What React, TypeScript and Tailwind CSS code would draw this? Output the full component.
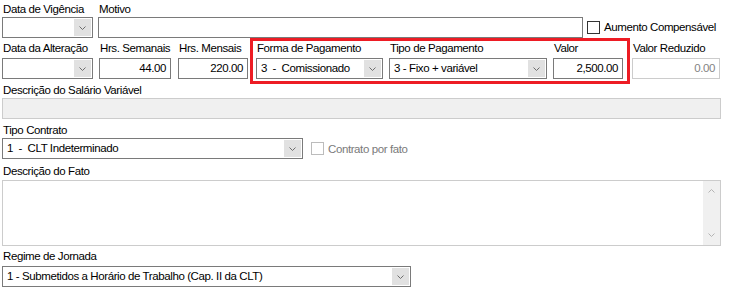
import React from 'react';

const Chevron = () => (
  <svg width="7" height="4" viewBox="0 0 7 4">
    <polyline points="0.5,0.5 3.5,3.5 6.5,0.5" fill="none" stroke="#6d6d6d" strokeWidth="1" />
  </svg>
);

const Combo = ({ value = '', className = '' }: { value?: string; className?: string }) => (
  <div className={`flex h-[21px] border border-[#7a7a7a] bg-white ${className}`}>
    <div className="flex-1 pl-[4px] leading-[19px] whitespace-pre overflow-hidden">{value}</div>
    <div className="w-[17px] my-px mr-px bg-[#e1e1e1] flex items-center justify-center">
      <Chevron />
    </div>
  </div>
);

const Input = ({
  value = '',
  className = '',
  disabled = false,
}: {
  value?: string;
  className?: string;
  disabled?: boolean;
}) => (
  <div
    className={`h-[21px] border pr-[4px] text-right leading-[19px] ${
      disabled ? 'border-[#cccccc] bg-white text-[#838383]' : 'border-[#7a7a7a] bg-white'
    } ${className}`}
  >
    {value}
  </div>
);

const CheckBox = ({ disabled = false }: { disabled?: boolean }) => (
  <div
    className={`w-[13px] h-[13px] shrink-0 border bg-white ${disabled ? 'border-[#bcbcbc]' : 'border-[#333333]'}`}
  />
);

const Label = ({ children, className = '' }: { children: React.ReactNode; className?: string }) => (
  <div className={`pl-px whitespace-nowrap ${className}`}>{children}</div>
);

export default function App() {
  return (
    <div className="w-[731px] h-[295px] bg-white text-black text-[11.5px] tracking-[-0.4px] font-['Liberation_Sans',Arial,sans-serif] overflow-hidden">
      <div className="flex flex-col pl-[2px]">
        {/* linha 1 */}
        <div className="flex items-start pt-px">
          <div className="w-[91px]">
            <Label className="h-[16px] leading-[16px]">Data de Vigência</Label>
            <Combo />
          </div>
          <div className="ml-[5px] w-[485px]">
            <Label className="h-[16px] leading-[16px]">Motivo</Label>
            <Input />
          </div>
          <div className="ml-[4px] mt-[19px] flex items-center gap-[4px] whitespace-nowrap">
            <CheckBox />
            <span className="leading-[14px]">Aumento Compensável</span>
          </div>
        </div>

        {/* linha 2 */}
        <div className="flex items-start">
          <div className="w-[91px] mt-[3px]">
            <Label className="h-[17px] leading-[14px]">Data da Alteração</Label>
            <Combo />
          </div>
          <div className="ml-[6px] w-[72px] mt-[3px]">
            <Label className="h-[17px] leading-[14px]">Hrs. Semanais</Label>
            <Input value="44.00" />
          </div>
          <div className="ml-[7px] w-[70px] mt-[3px]">
            <Label className="h-[17px] leading-[14px]">Hrs. Mensais</Label>
            <Input value="220.00" />
          </div>
          <div className="ml-[2px] flex border-[3px] border-[#ed1c24] pl-[3px] pr-[4px] pb-[2px] gap-[6px]">
            <div className="w-[127px]">
              <Label className="h-[17px] leading-[14px]">Forma de Pagamento</Label>
              <Combo value="3  -  Comissionado" />
            </div>
            <div className="w-[158px]">
              <Label className="h-[17px] leading-[14px]">Tipo de Pagamento</Label>
              <Combo value="3 - Fixo + variável" />
            </div>
            <div className="w-[70px]">
              <Label className="h-[17px] leading-[14px]">Valor</Label>
              <Input value="2,500.00" />
            </div>
          </div>
          <div className="ml-[2px] w-[88px] mt-[3px]">
            <Label className="h-[17px] leading-[14px]">Valor Reduzido</Label>
            <Input value="0.00" disabled />
          </div>
        </div>

        {/* linha 3 */}
        <Label className="h-[14px] leading-[12px]">Descrição do Salário Variável</Label>
        <div className="w-[719px] h-[21px] border border-[#cccccc] bg-[#f0f0f0]" />

        {/* linha 4 */}
        <Label className="h-[19px] pt-[4px] leading-[14px]">Tipo Contrato</Label>
        <div className="flex items-center">
          <Combo value="1  -  CLT Indeterminado" className="w-[301px]" />
          <div className="ml-[8px] flex items-center gap-[4px] text-[#7a7a7a] whitespace-nowrap">
            <CheckBox disabled />
            <span className="leading-[14px]">Contrato por fato</span>
          </div>
        </div>

        {/* linha 5 */}
        <Label className="h-[21px] pt-[5px] leading-[14px]">Descrição do Fato</Label>
        <div className="w-[719px] h-[66px] border border-[#cccccc] bg-white flex justify-end">
          <div className="w-[17px] bg-[#f0f0f0] flex flex-col items-center justify-between py-[8px]">
            <svg width="7" height="4" viewBox="0 0 7 4">
              <polyline points="0.5,3.5 3.5,0.5 6.5,3.5" fill="none" stroke="#b4b4b4" strokeWidth="1" />
            </svg>
            <svg width="7" height="4" viewBox="0 0 7 4">
              <polyline points="0.5,0.5 3.5,3.5 6.5,0.5" fill="none" stroke="#b4b4b4" strokeWidth="1" />
            </svg>
          </div>
        </div>

        {/* linha 6 */}
        <Label className="h-[20px] pt-[3px] leading-[14px]">Regime de Jornada</Label>
        <Combo value="1 - Submetidos a Horário de Trabalho (Cap. II da CLT)" className="w-[409px]" />
      </div>
    </div>
  );
}
